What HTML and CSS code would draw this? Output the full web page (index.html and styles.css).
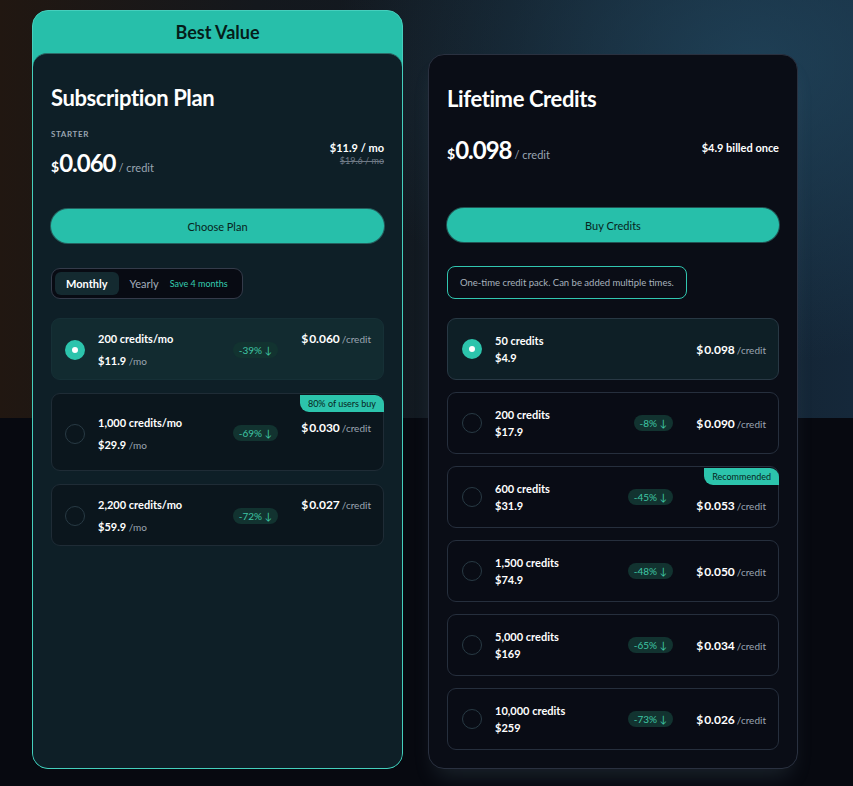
FILE: index.html
```html
<!DOCTYPE html>
<html lang="en">
<head>
    <meta charset="UTF-8">
    <meta name="viewport" content="width=device-width, initial-scale=1.0">
    <title>Pricing - Credits</title>
    <link rel="stylesheet" href="styles.css">
</head>
<body>

    <div class="plans">

        <!-- Subscription -->
        <div class="plan plan-featured">
            <div class="best">Best Value</div>
            <div class="plan-body">
                <h2 class="plan-title">Subscription Plan</h2>
                <div class="price-area">
                    <div class="tier">STARTER</div>
                    <div class="price-row">
                        <div class="price"><span class="cur">$</span><span class="amount">0.060</span><span class="unit">/ credit</span></div>
                        <div class="billing">
                            <div class="now">$11.9 / mo</div>
                            <div class="was">$19.6 / mo</div>
                        </div>
                    </div>
                </div>
                <button class="cta">Choose Plan</button>

                <div class="toggle">
                    <span class="tab active">Monthly</span>
                    <span class="tab">Yearly</span>
                    <span class="save">Save 4 months</span>
                </div>

                <div class="options">
                    <div class="option selected">
                        <span class="radio"></span>
                        <div class="info">
                            <div class="name">200 credits/mo</div>
                            <div class="cost">$11.9 <span>/mo</span></div>
                        </div>
                        <span class="off">-39% ↓</span>
                        <div class="per"><b>$</b><strong>0.060</strong><span>/credit</span></div>
                    </div>
                    <div class="option tagged">
                        <span class="tag">80% of users buy</span>
                        <span class="radio"></span>
                        <div class="info">
                            <div class="name">1,000 credits/mo</div>
                            <div class="cost">$29.9 <span>/mo</span></div>
                        </div>
                        <span class="off">-69% ↓</span>
                        <div class="per"><b>$</b><strong>0.030</strong><span>/credit</span></div>
                    </div>
                    <div class="option">
                        <span class="radio"></span>
                        <div class="info">
                            <div class="name">2,200 credits/mo</div>
                            <div class="cost">$59.9 <span>/mo</span></div>
                        </div>
                        <span class="off">-72% ↓</span>
                        <div class="per"><b>$</b><strong>0.027</strong><span>/credit</span></div>
                    </div>
                </div>
            </div>
        </div>

        <!-- Lifetime -->
        <div class="plan plan-lifetime">
            <h2 class="plan-title">Lifetime Credits</h2>
            <div class="price-area">
                <div class="price-row">
                    <div class="price"><span class="cur">$</span><span class="amount">0.098</span><span class="unit">/ credit</span></div>
                    <div class="billing">
                        <div class="now">$4.9 billed once</div>
                    </div>
                </div>
            </div>
            <button class="cta">Buy Credits</button>

            <div class="note">One-time credit pack. Can be added multiple times.</div>

            <div class="options">
                <div class="option selected">
                    <span class="radio"></span>
                    <div class="info">
                        <div class="name">50 credits</div>
                        <div class="cost">$4.9</div>
                    </div>
                    <div class="per"><b>$</b><strong>0.098</strong><span>/credit</span></div>
                </div>
                <div class="option">
                    <span class="radio"></span>
                    <div class="info">
                        <div class="name">200 credits</div>
                        <div class="cost">$17.9</div>
                    </div>
                    <span class="off">-8% ↓</span>
                    <div class="per"><b>$</b><strong>0.090</strong><span>/credit</span></div>
                </div>
                <div class="option tagged">
                    <span class="tag">Recommended</span>
                    <span class="radio"></span>
                    <div class="info">
                        <div class="name">600 credits</div>
                        <div class="cost">$31.9</div>
                    </div>
                    <span class="off">-45% ↓</span>
                    <div class="per"><b>$</b><strong>0.053</strong><span>/credit</span></div>
                </div>
                <div class="option">
                    <span class="radio"></span>
                    <div class="info">
                        <div class="name">1,500 credits</div>
                        <div class="cost">$74.9</div>
                    </div>
                    <span class="off">-48% ↓</span>
                    <div class="per"><b>$</b><strong>0.050</strong><span>/credit</span></div>
                </div>
                <div class="option">
                    <span class="radio"></span>
                    <div class="info">
                        <div class="name">5,000 credits</div>
                        <div class="cost">$169</div>
                    </div>
                    <span class="off">-65% ↓</span>
                    <div class="per"><b>$</b><strong>0.034</strong><span>/credit</span></div>
                </div>
                <div class="option">
                    <span class="radio"></span>
                    <div class="info">
                        <div class="name">10,000 credits</div>
                        <div class="cost">$259</div>
                    </div>
                    <span class="off">-73% ↓</span>
                    <div class="per"><b>$</b><strong>0.026</strong><span>/credit</span></div>
                </div>
            </div>
        </div>

    </div>

</body>
</html>
```

FILE: styles.css
```css
/* Page background: dark hero band on top, near black below */
body {
    margin: 0;
    min-height: 786px;
    font-family: 'Lato', 'Noto Sans', sans-serif;
    color: #ffffff;
    background-color: #070910;
    background-image:
        radial-gradient(ellipse 420px 300px at 88% 15%, rgba(34, 72, 96, 0.75), transparent),
        linear-gradient(90deg, #211711 0%, #14181d 30%, #111a23 60%, #15283a 100%);
    background-size: 100% 418px, 100% 418px;
    background-repeat: no-repeat;
}

.plans {
    display: flex;
    gap: 25px;
    padding: 10px 0 0 32px;
}

/* Cards */
.plan {
    box-sizing: border-box;
    border-radius: 16px;
}

.plan-featured {
    width: 371px;
    display: flex;
    flex-direction: column;
    overflow: hidden;
    background: #27bfaa;
    border: 1px solid #45cfbd;
}

.best {
    height: 42px;
    line-height: 42px;
    text-align: center;
    font-size: 18px;
    font-weight: 700;
    color: #051d1a;
}

.plan-body {
    flex: 1;
    padding: 30px 18px 18px;
    background: #0e1f27;
    border-top: 1px solid #2d6b68;
    border-radius: 14px 14px 0 0;
}

.plan-lifetime {
    width: 370px;
    margin-top: 44px;
    padding: 30px 18px 18px;
    background: #0a0d16;
    border: 1px solid #2a3140;
    box-shadow: 0 14px 22px -8px rgba(120, 160, 180, 0.18);
}

.plan-title {
    margin: 0;
    font-size: 22px;
    line-height: 28px;
    font-weight: 700;
    letter-spacing: -0.4px;
}

/* Price header */
.price-area {
    box-sizing: border-box;
    height: 97px;
    padding-top: 16px;
}

.plan-lifetime .price-area {
    padding-top: 22px;
    height: 95px;
}

.tier {
    font-size: 8px;
    line-height: 12px;
    letter-spacing: 0.6px;
    color: #9aa5b1;
    font-weight: 700;
}

.price-row {
    display: flex;
    justify-content: space-between;
    align-items: flex-start;
}

.plan-body .price-row {
    margin-top: 8px;
}

.price {
    line-height: 30px;
}

.cur {
    font-size: 14px;
    font-weight: 700;
}

.amount {
    font-size: 24px;
    font-weight: 700;
    letter-spacing: -1px;
}

.unit {
    margin-left: 3px;
    font-size: 11px;
    color: #9aa5b1;
}

.billing {
    margin-top: -7px;
    text-align: right;
}

.plan-lifetime .billing {
    margin-top: 6px;
}

.now {
    font-size: 11px;
    line-height: 14px;
    font-weight: 700;
}

.was {
    font-size: 9px;
    line-height: 12px;
    color: #6f7a86;
    text-decoration: line-through;
}

/* Buttons */
.cta {
    display: block;
    width: 100%;
    height: 34px;
    border: none;
    border-radius: 17px;
    background: #27bfaa;
    color: #082420;
    font-family: inherit;
    font-size: 11px;
    cursor: pointer;
    box-shadow: 0 0 0 1px rgba(80, 220, 200, 0.35);
}

/* Monthly / Yearly switch */
.toggle {
    display: inline-flex;
    align-items: center;
    margin-top: 25px;
    padding: 3px;
    width: 192px;
    box-sizing: border-box;
    height: 31px;
    border: 1px solid #343b4a;
    border-radius: 9px;
    background: #080b13;
}

.tab {
    padding: 0 11px;
    height: 23px;
    line-height: 23px;
    font-size: 11px;
    color: #a4adba;
    border-radius: 6px;
}

.tab.active {
    background: #142a30;
    color: #ffffff;
    font-weight: 700;
}

.save {
    font-size: 9px;
    color: #35cdb0;
}

.note {
    display: inline-block;
    margin-top: 24px;
    padding: 0 12px;
    height: 31px;
    line-height: 31px;
    font-size: 9.5px;
    color: #a8b2bd;
    border: 1px solid #31c6b0;
    border-radius: 8px;
}

/* Option rows */
.options {
    display: flex;
    flex-direction: column;
    gap: 12px;
    margin-top: 19px;
}

.plan-body .options {
    gap: 13px;
}

.option {
    position: relative;
    display: flex;
    align-items: center;
    min-height: 62px;
    box-sizing: border-box;
    padding: 11px 12px 9px 13px;
    border: 1px solid #1f2c36;
    border-radius: 9px;
    background: #0b161d;
}

.plan-lifetime .option {
    padding: 12px 12px 12px 14px;
    border-color: #262f3d;
    background: #090c15;
}

.option.selected {
    background: #122b30;
    border-color: #163036;
}

.plan-lifetime .option.selected {
    background: #0e1f26;
    border-color: #283844;
}

.radio {
    flex: none;
    width: 20px;
    height: 20px;
    box-sizing: border-box;
    border: 1px solid #283a44;
    border-radius: 50%;
}

.option.selected .radio {
    border: 7px solid #2cc4ac;
    background: #ffffff;
}

.info {
    flex: 1;
    margin-left: 13px;
}

.name {
    font-size: 11px;
    line-height: 17px;
    font-weight: 700;
}

.plan-body .name {
    margin-bottom: 5px;
}

.cost {
    font-size: 11px;
    line-height: 17px;
    font-weight: 700;
}

.cost span {
    font-weight: 400;
    font-size: 10px;
    color: #9aa5b1;
}

.off {
    padding: 0 6px;
    height: 16px;
    line-height: 16px;
    font-size: 10px;
    color: #3fc7a5;
    background: #123330;
    border-radius: 8px;
}

.per {
    margin-left: 23px;
    font-size: 12px;
    white-space: nowrap;
}

.plan-body .per {
    align-self: flex-start;
    margin-top: 1px;
}

.plan-body .option.tagged {
    min-height: 77px;
    padding-top: 20px;
    padding-bottom: 16px;
}

.plan-body .option.tagged .per {
    align-self: center;
    margin-top: 0;
    position: relative;
    top: -7px;
}

.plan-body .option.tagged .off {
    position: relative;
    top: -1px;
}

.plan-lifetime .option.tagged .per {
    margin-top: 16px;
}

.per b {
    margin-right: 1px;
    font-weight: 700;
}

.per strong {
    font-weight: 700;
}

.per span {
    margin-left: 2px;
    font-size: 10px;
    color: #9aa5b1;
}

.tag {
    position: absolute;
    top: 1px;
    right: -1px;
    padding: 0 8px;
    height: 17px;
    line-height: 17px;
    font-size: 9px;
    color: #082420;
    background: #2cc4ac;
    border-radius: 0 9px 0 9px;
}
```
